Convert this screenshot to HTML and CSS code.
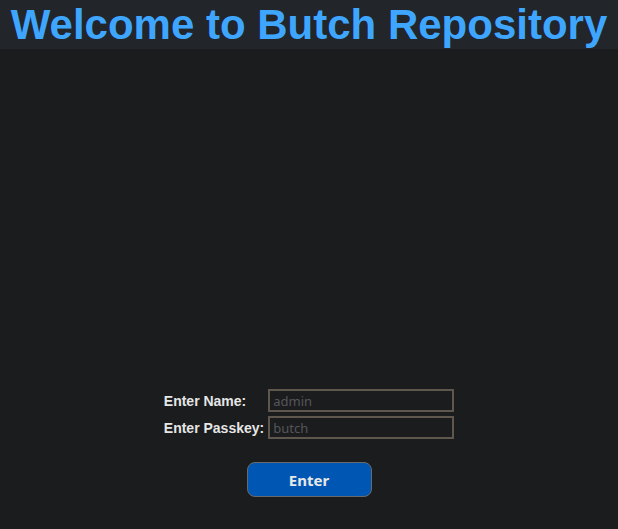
FILE: index.html
```html
<!DOCTYPE html>
<html lang="en">
<head>
<meta charset="utf-8">
<title>Butch Repository</title>
<link rel="stylesheet" href="styles.css">
</head>
<body>
<header class="site-header">
  <h1 class="title">Welcome to Butch Repository</h1>
</header>
<main class="main">
  <form class="login">
    <div class="fields">
      <label class="label" for="name">Enter Name:</label>
      <input class="field" id="name" type="text" placeholder="admin">
      <label class="label" for="pass">Enter Passkey:</label>
      <input class="field" id="pass" type="password" placeholder="butch">
    </div>
    <button class="enter" type="button">Enter</button>
  </form>
</main>
</body>
</html>
```
FILE: styles.css
```css
html, body {
  margin: 0;
  padding: 0;
  height: 100%;
}
body {
  background: #1b1c1e;
  font-family: "Liberation Sans", Arial, sans-serif;
  display: flex;
  flex-direction: column;
}
.site-header {
  background: #222529;
  height: 49px;
  display: flex;
  align-items: center;
  justify-content: center;
}
.title {
  margin: 0;
  font-size: 42px;
  font-weight: bold;
  color: #3ea6ff;
  line-height: 48px;
  padding-top: 1px;
}
.main {
  flex: 1;
  display: flex;
  flex-direction: column;
  justify-content: flex-end;
  align-items: center;
  padding-bottom: 32px;
}
.login {
  display: flex;
  flex-direction: column;
  align-items: center;
}
.fields {
  display: grid;
  grid-template-columns: auto 186px;
  column-gap: 4px;
  row-gap: 4px;
  align-items: center;
}
.label {
  font-size: 14px;
  font-weight: bold;
  color: #e6e6e6;
}
.field {
  box-sizing: border-box;
  width: 186px;
  height: 23px;
  background: #1b1c1e;
  border: 2px solid #5f574e;
  color: #cccccc;
  font-family: "Noto Sans", sans-serif;
  font-size: 13px;
  padding: 0 3px;
  outline: none;
}
.field::placeholder {
  color: #56565a;
}
.enter {
  margin-top: 23px;
  width: 125px;
  height: 35px;
  background: #0056b3;
  border: 1px solid #6a6a6a;
  border-radius: 8px;
  color: #e8e8e8;
  font-family: "Noto Sans", "Open Sans", sans-serif;
  font-weight: bold;
  font-size: 15px;
  cursor: pointer;
}
```
